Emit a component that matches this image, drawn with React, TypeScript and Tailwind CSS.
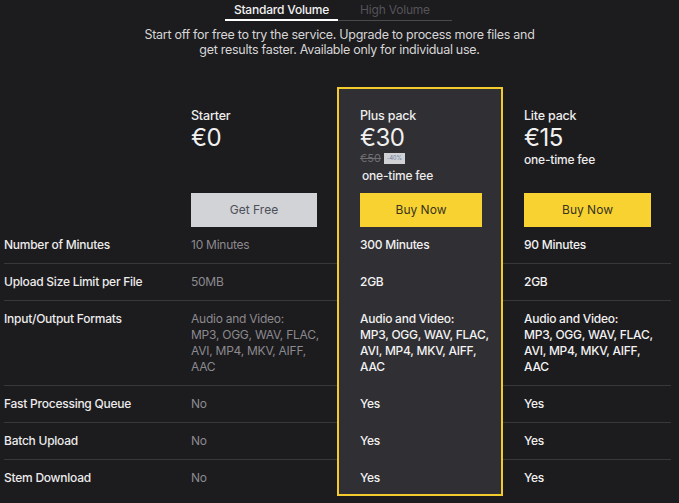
import React from "react";

const font = { fontFamily: "Inter, 'Noto Sans', sans-serif" };

type Row = { label: string; starter: string[]; plus: string[]; lite: string[]; tall?: boolean };

const fmt = ["Audio and Video:", "MP3, OGG, WAV, FLAC,", "AVI, MP4, MKV, AIFF,", "AAC"];

const rows: Row[] = [
  { label: "Number of Minutes", starter: ["10 Minutes"], plus: ["300 Minutes"], lite: ["90 Minutes"] },
  { label: "Upload Size Limit per File", starter: ["50MB"], plus: ["2GB"], lite: ["2GB"] },
  { label: "Input/Output Formats", starter: fmt, plus: fmt, lite: fmt, tall: true },
  { label: "Fast Processing Queue", starter: ["No"], plus: ["Yes"], lite: ["Yes"] },
  { label: "Batch Upload", starter: ["No"], plus: ["Yes"], lite: ["Yes"] },
  { label: "Stem Download", starter: ["No"], plus: ["Yes"], lite: ["Yes"] },
];

function Lines({ lines }: { lines: string[] }) {
  return (
    <>
      {lines.map((l, i) => (
        <div key={i}>{l}</div>
      ))}
    </>
  );
}

export default function App() {
  return (
    <div
      className="w-[679px] h-[503px] overflow-hidden bg-[#1c1b1e] text-[#ececec]"
      style={font}
    >
      {/* Tabs */}
      <div className="flex justify-center">
        <div className="flex ml-[-2px] border-b border-[#4a494d]">
          <div className="w-[113px] text-center text-[12px] leading-[16px] pt-[2px] pb-[1px] font-medium text-[#f2f2f2] border-b-2 border-white mb-[-1px] tracking-[-0.2px]">
            Standard Volume
          </div>
          <div className="w-[114px] text-center text-[12px] leading-[16px] pt-[2px] pb-[1px] text-[#555459] tracking-[-0.2px]">
            High Volume
          </div>
        </div>
      </div>
      <p className="mt-[6px] text-center text-[12.5px] leading-[15px] text-[#d6d6d6] tracking-[-0.28px]">
        Start off for free to try the service. Upgrade to process more files and
        <br />
        get results faster. Available only for individual use.
      </p>

      {/* Table */}
      <div className="flex ml-[4px] mt-[30px]">
        {/* Labels */}
        <div className="w-[167px] pt-[2px]">
          <div className="h-[138px]" />
          {rows.map((r, i) => (
            <div
              key={i}
              className={`${r.tall ? "h-[85px]" : "h-[37px]"} ${i < rows.length - 1 ? "border-b border-[#38373b]" : ""} py-[10px] text-[12px] leading-[16px] font-medium text-[#ececec] tracking-[-0.25px]`}
            >
              {r.label}
            </div>
          ))}
        </div>

        {/* Starter */}
        <div className="w-[166px] pt-[2px]">
          <div className="h-[104px] pl-[20px] pt-[19px]">
            <div className="text-[12.5px] leading-[16px] font-medium text-[#ededed] tracking-[-0.2px]">Starter</div>
            <div className="text-[24px] leading-[28px] text-[#f0f0f0] tracking-[-0.5px]">€0</div>
          </div>
          <div className="h-[34px] pl-[20px]">
            <div className="w-[126px] h-[34px] bg-[#d1d3d6] flex items-center justify-center text-[12px] text-[#4b4f58]">
              Get Free
            </div>
          </div>
          {rows.map((r, i) => (
            <div
              key={i}
              className={`${r.tall ? "h-[85px]" : "h-[37px]"} ${i < rows.length - 1 ? "border-b border-[#38373b]" : ""} pl-[20px] py-[10px] text-[12px] leading-[16px] text-[#8b8a8e] tracking-[-0.25px]`}
            >
              <Lines lines={r.starter} />
            </div>
          ))}
        </div>

        {/* Plus card */}
        <div className="w-[166px] h-[409px] border-2 border-[#f4cb2c] bg-[#302f33]">
          <div className="h-[104px] pl-[21px] pt-[19px]">
            <div className="text-[12.5px] leading-[16px] font-medium text-[#ededed] tracking-[-0.2px]">Plus pack</div>
            <div className="text-[24px] leading-[28px] text-[#f0f0f0] tracking-[-0.5px]">€30</div>
            <div className="flex items-center h-[12px] gap-[3px]">
              <span className="text-[11px] leading-[12px] text-[#6f6e72] line-through">€50</span>
              <span className="h-[11px] px-[3px] bg-[#cfd1d5] text-[5.5px] leading-[11px] text-[#6a7898]">-40%</span>
            </div>
            <div className="mt-[4px] ml-[2px] text-[12px] leading-[16px] font-medium text-[#ececec] tracking-[-0.2px]">one-time fee</div>
          </div>
          <div className="h-[34px] pl-[21px]">
            <div className="w-[122px] h-[34px] bg-[#f8d230] flex items-center justify-center text-[12px] text-[#3a3320]">
              Buy Now
            </div>
          </div>
          {rows.map((r, i) => (
            <div
              key={i}
              className={`${r.tall ? "h-[85px]" : i === rows.length - 1 ? "h-[33px]" : "h-[37px]"} pl-[21px] py-[10px] text-[12px] leading-[16px] font-medium text-[#f2f2f2] tracking-[-0.25px]`}
            >
              <Lines lines={r.plus} />
            </div>
          ))}
        </div>

        {/* Lite */}
        <div className="w-[168px] pt-[2px]">
          <div className="h-[104px] pl-[21px] pt-[19px]">
            <div className="text-[12.5px] leading-[16px] font-medium text-[#ededed] tracking-[-0.2px]">Lite pack</div>
            <div className="text-[24px] leading-[28px] text-[#f0f0f0] tracking-[-0.5px]">€15</div>
            <div className="text-[12px] leading-[16px] font-medium text-[#ececec] tracking-[-0.2px]">one-time fee</div>
          </div>
          <div className="h-[34px] pl-[21px]">
            <div className="w-[127px] h-[34px] bg-[#f8d230] flex items-center justify-center text-[12px] text-[#3a3320]">
              Buy Now
            </div>
          </div>
          {rows.map((r, i) => (
            <div
              key={i}
              className={`${r.tall ? "h-[85px]" : "h-[37px]"} ${i < rows.length - 1 ? "border-b border-[#38373b]" : ""} pl-[21px] py-[10px] text-[12px] leading-[16px] font-medium text-[#f2f2f2] tracking-[-0.25px]`}
            >
              <Lines lines={r.lite} />
            </div>
          ))}
        </div>
      </div>
    </div>
  );
}
